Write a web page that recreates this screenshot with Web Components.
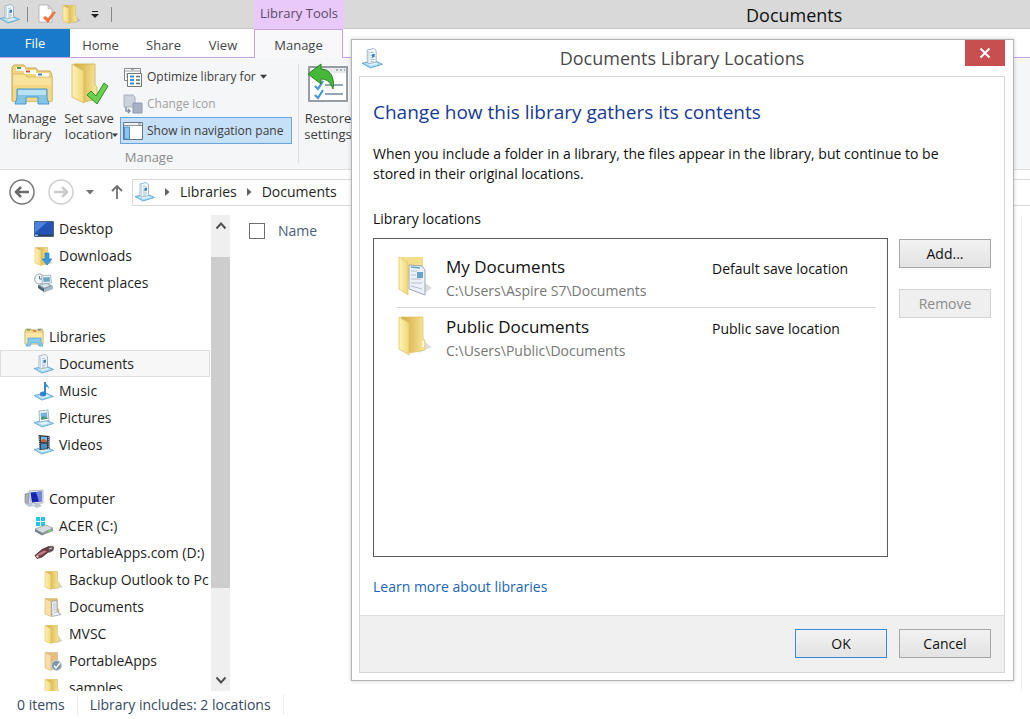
<!DOCTYPE html>
<html lang="en">
<head>
<meta charset="utf-8">
<title>Documents</title>
<style>
html,body{margin:0;height:100%}
body{font-family:"Open Sans","Noto Sans",sans-serif;font-size:14px;line-height:20px;color:#1e1e1e;background:#fff;overflow:hidden;
--small:13px;--title:18px}
</style>
</head>
<body>
<library-app></library-app>
<script>
const libraryTray = `<path d="M0 14.500 12 12 19.500 15.500 8 19Z" fill="#a3d8f2" stroke="#56a0cc" stroke-width=".8"/><path d="m4 15 8-1.700 4 2L8.500 17Z" fill="#dcf2fc"/>`;
const folderFills = `<defs><linearGradient id="inner"><stop offset="0" stop-color="#cfa94a"/><stop offset=".45" stop-color="#e2c262"/><stop offset="1" stop-color="#f8e8a0"/></linearGradient><linearGradient id="flap"><stop offset="0" stop-color="#fdf3b8"/><stop offset="1" stop-color="#f0d878"/></linearGradient></defs>`;
const folderShape = folderFills + `<path d="M14 12 19 17 14 18.500H9Z" fill="#8b929c" opacity=".35"/><path d="M2 1.500h11.500v10l1.500 1v5l-8 1.500Z" fill="url(#inner)" stroke="#dcbc58" stroke-width=".6"/><path d="M1 1.500 7 4.500V19.500L1 17Z" fill="url(#flap)" stroke="#dcbf60" stroke-width=".6"/>`;
const ICONS = {
  doclib: ['0 0 20 20', libraryTray + `<path d="M5 2 11 .5 13.500 2.500V13.500L6 15 5 13.500Z" fill="#f3f9fd" stroke="#8fa9bd" stroke-width=".8"/><path d="M6.500 3v11" stroke="#b9cfde" stroke-width=".8"/><path d="M8 4.500 11 4M8 7h1.500M8 9h1.500M8 11h4M8 13h3" stroke="#90b1c8" stroke-width=".8"/><path d="M9.500 6 12 5.500v3l-2.500.7Z" fill="#3c7fb8"/>`],
  music: ['0 0 20 20', libraryTray + `<path d="M11 1v11.500" stroke="#2674bd" stroke-width="1.800"/><path d="M11 1c1 3 4 3 4 7-1-2-2-2.500-4-3Z" fill="#2e8bd6"/><ellipse cx="9" cy="13" rx="3.200" ry="2.500" fill="#2f84cf"/>`],
  pictures: ['0 0 20 20', libraryTray + `<path d="M5 3 14 2l1 10.500-9.500 1.500Z" fill="#f4f9fc" stroke="#8ca4b4" stroke-width=".8"/><path d="m6.500 5 6.500-.8.6 6.500-6.600 1Z" fill="#75b5dc"/><path d="m7 9.500 2.600-1.500 4 2v.7l-6.600 1Z" fill="#4f9578"/>`],
  videos: ['0 0 20 20', libraryTray + `<path d="m4.500 0 11 1v13L5.500 15Z" fill="#28333f"/><path d="m7 1.500 6 .5v5.200L7 7Z" fill="#78bce9"/><path d="m7 5 3-1 3 2v1.200L7 7Z" fill="#bd6338"/><path d="m7 8.500 6 .3v4.700l-6 .5Z" fill="#4d8fc0"/><path d="M5.700 1.500v13M14.300 2v12" stroke="#e0e4e8" stroke-width=".9" stroke-dasharray="1 1.200"/>`],
  newdoc: ['0 0 20 20', `<path d="M2 1h9l4 4v13H2Z" fill="#fff" stroke="#a5a5a5" stroke-width=".7"/><path d="M11 1v4h4Z" fill="#dadada" stroke="#aaa" stroke-width=".5"/><path d="m6 14 2-2 3 2 6-7 2 1.500L11 19Z" fill="#ee7445"/>`],
  folder: ['0 0 20 20', folderShape],
  folderdoc: ['0 0 20 20', `<path d="M2 1.500h11.500v10l1.500 1v5l-8 1.500Z" fill="#dfbe7c" stroke="#d8ba6c" stroke-width=".6"/><path d="M7.500 4.500 13 3.500v11l4 3-9 2Z" fill="#eceff5" stroke="#8f95a3" stroke-width=".7"/><path d="M9 7h3M9 9h3M9 11h3M9 13h3M10 15.500h3" stroke="#a8b4c8" stroke-width=".7"/><path d="M1 1.500 7 4.500V19.500L1 17Z" fill="#f8dfa6" stroke="#d2b472" stroke-width=".6"/>`],
  folderapp: ['0 0 20 20', `<path d="M2 1.500h11.500v10l1.500 1v5l-8 1.500Z" fill="#e5bd7e" stroke="#d5b47b" stroke-width=".6"/><path d="M1 1.500 7 4.500V19.500L1 17Z" fill="#f8dcaa" stroke="#d2b17b" stroke-width=".6"/><circle cx="12.500" cy="14.500" r="5" fill="#7898aa" stroke="#ced9df"/><path d="m10 14.500 2 2.500 4-5" stroke="#fff" stroke-width="1.500" fill="none"/>`],
  folderdown: ['0 0 20 20', folderShape + `<path d="M11 7h4v6h3l-5 6-5-6h3Z" fill="#369be2" stroke="#207ab8" stroke-width=".6"/>`],
  desktop: ['0 0 20 20', `<path d="M.5 2.500h19v15H.5Z" fill="#2354b5" stroke="#4c6583"/><path d="M1 3h12L1 14Z" fill="#4b82df"/><path d="M1 15.500h18V17H1Z" fill="#2b425f"/><path d="M1 15.500h3V17H1Z" fill="#8cbde8"/>`],
  recent: ['0 0 20 20', `<circle cx="5.500" cy="6" r="5" fill="#eef4f8" stroke="#9aa8b4"/><path d="M5.500 3v3H8" stroke="#597790" fill="none"/><path d="m7.500 3 9-1 1 8-9 1Z" fill="#eef5fa" stroke="#8b9cab" stroke-width=".7"/><path d="m9 4.500 6.500-.6.6 4.500-6.500.6Z" fill="#69a4c2"/><path d="m4 12 9-2 6 3-9 4Z" fill="#8296a6"/><path d="m4 12 6 4v3l-6-4Z" fill="#4b6172"/><path d="m10 16 9-3v3l-9 3.500Z" fill="#a7b8c5"/><path d="m6 12 7-1.300 3 2-6 2Z" fill="#d9e6ee"/>`],
  libraries: ['0 0 20 20', `<path d="M1 4 2 2h5l1 1h5l1-1h4l1 2v13H1Z" fill="#f0d889" stroke="#b99c4c" stroke-width=".8"/><path d="M3 3h3" stroke="#52a661" stroke-width="1.300"/><path d="M9 4h3" stroke="#cd644e" stroke-width="1.300"/><path d="M14 3h3" stroke="#4d90c4" stroke-width="1.300"/><path d="M1.500 6h17v11h-17Z" fill="#fae8a4"/><path d="M4 11h13v4l2 4h-4l-1-3H7l-1 3H2l2-4Z" fill="#85cdef" stroke="#569dc7" stroke-width=".7"/>`],
  computer: ['0 0 20 20', `<path d="m1 5 4-1v12l-4-2Z" fill="#a8b1b9" stroke="#78818a" stroke-width=".6"/><path d="M5 2 19 1V14L7 15Z" fill="#e1e6eb" stroke="#9aa4ac" stroke-width=".7"/><path d="M6.500 3.500 17.500 2.500v10L8 13.500Z" fill="#1a24b4"/><path d="m12 3 5.500-.5v10L15 12.700Z" fill="#6e86e0"/><path d="m11 15 4-.5 3 2.500-5 2-4-2Z" fill="#c0c8cf"/><path d="m1 15 6-1 3 3-5 1Z" fill="#bec6cf"/>`],
  drive: ['0 0 20 20', `<path d="M2 1h4v4H2ZM7 1h4v4H7ZM2 6h4v4H2ZM7 6h4v4H7Z" fill="#23c4ed"/><path d="m1 13 11-4 7 3-11 5Z" fill="#d6dcdf" stroke="#879295" stroke-width=".6"/><path d="m1 13 7 4v2.500l-7-4Z" fill="#76828a"/><path d="m8 17 11-5v3L8 19.500Z" fill="#8f9a9e"/><path d="m14 15.500 3-1.300" stroke="#72e271" stroke-width="1.300"/>`],
  usb: ['0 0 20 20', `<path d="M1 12.500 8 6.500l7-3 2 3.500-9 7-5 1.500Z" fill="#763b43" stroke="#4d2930" stroke-width=".8"/><path d="m3 11.500 7-4 3 1-7 4Z" fill="#bd8289"/><path d="m13 4.500 5-1.500 2 1.500-1 3-4 2Z" fill="#6b5559" stroke="#4a3c40" stroke-width=".6"/><path d="m15 6 3-1" stroke="#ccc"/><circle cx="3.500" cy="13.500" r="1.200" fill="#e4cfd1"/>`],
  managelib: ['0 0 42 42', `<path d="M1 10V4l2-2h10l2 3h10l2 3h12l2 4v26H1Z" fill="#efd57c" stroke="#caa64a"/><path d="M5 4h9v4H5Z" fill="#fff"/><path d="M13 7h12v4H13Z" fill="#fff"/><path d="M25 10h13v4H25Z" fill="#fff"/><path d="M6 5h4" stroke="#4b9b4b" stroke-width="2"/><path d="M15 8.500h4" stroke="#d64b3a" stroke-width="2"/><path d="M27 11.500h4" stroke="#3c7dbd" stroke-width="2"/><path d="M1.500 11H14l2 3h25v24.500H1.500Z" fill="#f8e39a" stroke="#d5b55d" stroke-width=".8"/><path d="M2 22h38v16H2Z" fill="#ebcd73" opacity=".5"/><path d="M6 26h30v9l2 6H27v-7H15v7H4l2-6Z" fill="#82c5ea" stroke="#4898c9"/><path d="M7 27h28v5H7Z" fill="#b9e2f6"/>`],
  savelocation: ['0 0 42 42', folderFills + `<path d="M6 1h21v21l2 2v12l-13 3Z" fill="url(#inner)" stroke="#d2ae50" stroke-width=".8"/><path d="M4 1 16 8v32L4 34Z" fill="url(#flap)" stroke="#d8b65a" stroke-width=".8"/><path d="m19 32 4-4 5 5 8-13 4 3-11 18Z" fill="#6bd050" stroke="#2f8f29"/>`],
  optimize: ['0 0 20 20', `<path d="M1.500 1.500h16v12h-16Z" fill="#fff" stroke="#888"/><path d="M2 4h15" stroke="#999"/><path d="M3 7h2M3 10h2M8 2.500h3" stroke="#9ab"/><path d="M4.500 6.500h14v13h-14Z" fill="#fff" stroke="#777"/><path d="M7 9.500h4M7 13h4M7 16.500h4" stroke="#438aca" stroke-width="2"/><path d="M13 9.500h4M13 13h4M13 16.500h4" stroke="#5c7468" stroke-width="1.500"/>`],
  changeicon: ['0 0 20 20', `<path d="M1 1h9l2 2v10H1Z" fill="#ccd2dc" stroke="#a8b0bd"/><path d="M10 9h9v10h-9Z" fill="#a6b1c6" stroke="#8e9ab0"/><path d="M3 13v4h4M5 15l2 2-2 2" fill="none" stroke="#8491ad" stroke-width="1.500"/>`],
  navpane: ['0 0 20 20', `<path d="M.5 1.500h19v17H.5Z" fill="#fff" stroke="#68747f"/><path d="M1 2h18v2.500H1Z" fill="#f4f4f4"/><path d="M1 4.500h18" stroke="#8b959e"/><path d="M1.500 6h5v12h-5Z" fill="#8dc5ef" stroke="#4b93ca"/><path d="M15 3h3" stroke="#888"/>`],
  restore: ['0 0 42 42', `<path d="M2 4h38v34H2Z" fill="#fff" stroke="#969da4" stroke-width="2"/><path d="M3 5h36v5H3Z" fill="#e8eaed"/><path d="M29 7h2M33 7h2M37 7h1" stroke="#777"/><path d="M18 22h18M18 31h18" stroke="#94a7b4" stroke-width="2"/><path d="m8 23 3 3 5-8M8 32l3 3 5-8" fill="none" stroke="#4498d3" stroke-width="2.200"/><path d="M1 11 14 1v5c9 0 14 8 12 20-3-8-7-10-12-10v5Z" fill="#46b838" stroke="#258222"/>`],
  mydocs: ['0 0 40 40', folderFills + `<path d="m25 38 9-6-7-5Z" fill="#777" opacity=".25"/><path d="M3 1h22v27l-12 4Z" fill="#f3de8a"/><path d="m11 9 13 1 3 4v25l-16-6Z" fill="#eef1fa" stroke="#9fa3b8"/><path d="m13 11 9 1" stroke="#5da7bd" stroke-width="1.500"/><path d="M13 15h6M13 19h5M13 23h10M13 27h11M13 30l11 3" stroke="#b3bed3"/><path d="M19 16h6v6h-6Z" fill="#62a4ca"/><path d="m1 1 9 6v32l-9-6Z" fill="url(#flap)" stroke="#e1c56d" stroke-width=".8"/>`],
  publicdocs: ['0 0 40 40', folderFills + `<path d="m20 37 14-6-8-5Z" fill="#777" opacity=".25"/><path d="M3 1h22v21l2 3v9l-16 3Z" fill="url(#inner)" stroke="#dfc064" stroke-width=".7"/><path d="m1 1 10 6v32l-10-6Z" fill="url(#flap)" stroke="#e1c56d" stroke-width=".8"/><path d="M25 25v6" stroke="#fff" stroke-width="1.500"/>`],
  back: ['0 0 26 26', `<circle cx="13" cy="13" r="12" fill="#fff" stroke="#777" stroke-width="1.500"/><path d="M20 13H8M12 8l-5 5 5 5" stroke="#6b6b6b" stroke-width="2.500" fill="none"/>`],
  forward: ['0 0 26 26', `<circle cx="13" cy="13" r="12" fill="#fff" stroke="#cfcfcf" stroke-width="1.500"/><path d="M6 13h12M14 8l5 5-5 5" stroke="#cacaca" stroke-width="2.500" fill="none"/>`],
  up: ['0 0 16 16', `<path d="M8 15V2M3 7l5-5 5 5" stroke="#707070" stroke-width="1.800" fill="none"/>`],
  down: ['0 0 8 8', `<path d="M0 2h8L4 6.500Z" fill="currentColor"/>`],
  right: ['0 0 8 8', `<path d="M2 0v8l4.500-4Z" fill="#606060"/>`],
  chevup: ['0 0 12 12', `<path d="m1.500 8.500 4.500-5 4.500 5" fill="none" stroke="#505050" stroke-width="2"/>`],
  chevdown: ['0 0 12 12', `<path d="m1.500 3.500 4.500 5 4.500-5" fill="none" stroke="#505050" stroke-width="2"/>`],
  customize: ['0 0 8 8', `<path d="M1 1.500h6" stroke="#222"/><path d="M0 4h8L4 8Z" fill="#222"/>`],
  close: ['0 0 12 12', `<path d="m1.500 1.500 9 9m0-9-9 9" stroke="#fff" stroke-width="2"/>`]
};
const define = (name, html) => {
  const template = document.createElement('template');
  template.innerHTML = html;
  customElements.define(name, class extends HTMLElement {
    constructor(){ super(); this.attachShadow({mode:'open'}).append(template.content.cloneNode(true)); }
    connectedCallback(){
      const own = this.shadowRoot.querySelector('ui-icon[data-own]');
      if (own && this.getAttribute('icon')) own.setAttribute('name', this.getAttribute('icon'));
      const button = this.shadowRoot.querySelector('button');
      if (button && this.hasAttribute('disabled')) button.disabled = true;
    }
  });
};

customElements.define('ui-icon', class extends HTMLElement {
  static observedAttributes = ['name'];
  constructor(){ super(); this.attachShadow({mode:'open'}); }
  attributeChangedCallback(){
    const [box, art] = ICONS[this.getAttribute('name')];
    this.shadowRoot.innerHTML = `<style>:host{display:block;flex:none;width:var(--size,20px);height:var(--size,20px)}svg{display:block;width:100%;height:100%}</style><svg viewBox="${box}" aria-hidden="true">${art}</svg>`;
  }
});

define('push-button', `<style>
:host{display:block;width:92px}
button{width:100%;height:29px;padding:0;border:1px solid #a6a6a6;background:linear-gradient(#f2f2f2,#e3e3e3);font:inherit;color:#111}
:host([primary]) button{border-color:#3d8bd8}
button:disabled{border-color:#d3d3d3;background:#efefef;color:#8b8b8b}
</style><button type="button"><slot></slot></button>`);

define('ribbon-tab', `<style>
:host{display:block}
button{width:100%;height:100%;padding:3px 0 0;border:0;background:none;font:inherit;font-size:var(--small);color:#444}
:host([file]) button{padding:0;background:#1979ca;color:#fff}
:host([active]) button{padding-top:2px;background:#f8f8fb;border:solid #c9a2dd;border-width:1px 1px 0}
</style><button type="button"><slot></slot></button>`);

define('ribbon-large', `<style>
:host{display:block}
button{width:100%;padding:0;border:0;background:none;font:inherit;font-size:var(--small);line-height:16px;color:#3c3c3c;text-align:center;white-space:nowrap}
ui-icon{--size:42px;margin:0 auto 5px}
</style><button type="button"><ui-icon data-own></ui-icon><slot></slot></button>`);

define('ribbon-small', `<style>
:host{display:block}
button{display:flex;align-items:center;gap:4px;width:100%;height:27px;padding:0 3px 0 2px;border:1px solid transparent;background:none;font:inherit;font-size:12px;color:#3c3c3c;white-space:nowrap}
button:disabled{color:#a0a0a0}
:host([pressed]) button{background:#c6e0f8;border-color:#66a5e0}
</style><button type="button"><ui-icon data-own></ui-icon><slot></slot></button>`);

define('nav-item', `<style>
:host{display:block;box-sizing:border-box;height:27px;flex:none;padding-left:calc(23px + var(--level,0)*10px);border:1px solid transparent;margin-right:1px}
:host([selected]){background:#f7f7f7;border-color:#dedede}
a{display:flex;align-items:center;gap:5px;height:25px;color:inherit;text-decoration:none;white-space:nowrap}
</style><a href="#"><ui-icon data-own></ui-icon><span><slot></slot></span></a>`);

define('title-bar', `<style>
:host{display:flex;height:28px;flex:none;background:#d9d9d9;border-bottom:1px solid #c6c6c6}
.quick{display:flex;align-items:center;width:254px;flex:none}
button{border:0;padding:0;background:none;color:#222}
i{width:1px;height:15px;background:#888;margin:0 9px 0 7px}
.fresh{margin-right:5px}.more{--size:8px;margin:0 5px 0 9px}
.tools{width:90px;flex:none;background:#e8c9fa;color:#5c4a68;text-align:center;font-size:var(--small);line-height:26px;height:29px}
h1{margin:0;padding:0 0 0 402px;font-size:var(--title);font-weight:400;line-height:30px;color:#111}
</style><div class="quick"><ui-icon name="doclib"></ui-icon><i></i>
<button class="fresh" type="button" aria-label="Properties"><ui-icon name="newdoc"></ui-icon></button>
<button type="button" aria-label="New folder"><ui-icon name="folder"></ui-icon></button>
<button class="more" type="button" aria-label="Customize"><ui-icon name="customize"></ui-icon></button><i></i></div>
<div class="tools">Library Tools</div><h1>Documents</h1>`);

define('ribbon-tabs', `<style>
:host{display:flex;height:29px;flex:none;background:linear-gradient(#c9a2dd,#c9a2dd) bottom/100% 1px no-repeat}
.file{width:70px;height:28px}.home{width:61px}.share{width:65px}.view{width:54px;margin-right:4px}.manage{width:89px}
</style><ribbon-tab class="file" file>File</ribbon-tab><ribbon-tab class="home">Home</ribbon-tab><ribbon-tab class="share">Share</ribbon-tab><ribbon-tab class="view">View</ribbon-tab><ribbon-tab class="manage" active>Manage</ribbon-tab>`);

define('ribbon-panel', `<style>
:host{display:flex;height:111px;flex:none;background:#f5f6f8;border-bottom:1px solid #dcdddf;font-size:var(--small)}
.group{display:flex;flex-direction:column;width:298px;flex:none}
.tools{display:flex;padding-top:5px;height:84px}
.lib{width:64px}.save{position:relative;width:50px;margin-right:6px}.small{width:172px}
.label{text-align:center;line-height:24px;color:#8b8b8b}
.line{width:1px;margin:6px 0;background:#dedfe1}
.restore{width:58px;padding-top:5px}
.arrow{position:absolute;right:-4px;top:69px;--size:6px;margin:0}
</style><div class="group"><div class="tools">
<ribbon-large class="lib" icon="managelib">Manage<br>library</ribbon-large>
<ribbon-large class="save" icon="savelocation">Set save<br>location<ui-icon class="arrow" name="down"></ui-icon></ribbon-large>
<div class="small"><ribbon-small icon="optimize">Optimize library for <ui-icon style="--size:7px" name="down"></ui-icon></ribbon-small>
<ribbon-small icon="changeicon" disabled>Change icon</ribbon-small>
<ribbon-small icon="navpane" pressed>Show in navigation pane</ribbon-small></div>
</div><div class="label">Manage</div></div><div class="line"></div>
<ribbon-large class="restore" icon="restore">Restore<br>settings</ribbon-large>`);

define('address-bar', `<style>
:host{display:flex;align-items:center;height:44px;flex:none;padding-left:9px}
button{border:0;padding:0;background:none;color:#707070}
.round{--size:26px;margin-right:13px}.hist{--size:8px;margin:0 15px 0 -1px}.up{--size:16px;margin-right:7px}
nav{display:flex;align-items:center;flex:1;height:25px;border:1px solid #d9d9d9;border-right:0;padding-left:2px}
nav>ui-icon{--size:8px;margin:0 9px 0 8px}nav>.lib{--size:20px;margin:0}
a{color:inherit;text-decoration:none}
</style><button class="round" type="button" aria-label="Back"><ui-icon name="back"></ui-icon></button>
<button class="round" type="button" aria-label="Forward"><ui-icon name="forward"></ui-icon></button>
<button class="hist" type="button" aria-label="Recent locations"><ui-icon name="down"></ui-icon></button>
<button class="up" type="button" aria-label="Up"><ui-icon name="up"></ui-icon></button>
<nav><ui-icon class="lib" name="doclib"></ui-icon><ui-icon name="right"></ui-icon><a href="#">Libraries</a><ui-icon name="right"></ui-icon><a href="#">Documents</a></nav>`);

define('nav-pane', `<style>
:host{display:flex;width:230px;flex:none;overflow:hidden}
nav{flex:1;min-width:0;overflow:hidden;display:flex;flex-direction:column}
.gap{height:27px;flex:none}
.one{--level:1}.two{--level:2}
.bar{display:flex;flex-direction:column;width:19px;flex:none;background:#efefef}
.bar button{display:grid;place-items:center;height:22px;padding:0;border:0;background:none;--size:12px}
.track{flex:1;display:grid;grid-template-rows:20fr 331fr 81fr}
.thumb{grid-row:2;background:#cdcdcd}
</style><nav>
<nav-item class="one" icon="desktop">Desktop</nav-item><nav-item class="one" icon="folderdown">Downloads</nav-item><nav-item class="one" icon="recent">Recent places</nav-item>
<div class="gap"></div>
<nav-item icon="libraries">Libraries</nav-item><nav-item class="one" icon="doclib" selected>Documents</nav-item><nav-item class="one" icon="music">Music</nav-item><nav-item class="one" icon="pictures">Pictures</nav-item><nav-item class="one" icon="videos">Videos</nav-item>
<div class="gap"></div>
<nav-item icon="computer">Computer</nav-item><nav-item class="one" icon="drive">ACER (C:)</nav-item><nav-item class="one" icon="usb">PortableApps.com (D:)</nav-item>
<nav-item class="two" icon="folder">Backup Outlook to Pc</nav-item><nav-item class="two" icon="folderdoc">Documents</nav-item><nav-item class="two" icon="folder">MVSC</nav-item><nav-item class="two" icon="folderapp">PortableApps</nav-item><nav-item class="two" icon="folder">samples</nav-item>
</nav><div class="bar"><button type="button" aria-label="Scroll up"><ui-icon name="chevup"></ui-icon></button><div class="track"><div class="thumb"></div></div><button type="button" aria-label="Scroll down"><ui-icon name="chevdown"></ui-icon></button></div>`);

define('file-list', `<style>
:host{display:block;flex:1;margin-right:8px;border-right:1px solid #f0f0f0}
label{display:flex;align-items:center;gap:13px;padding:6px 19px;color:#4c6078}
input{appearance:none;width:16px;height:16px;margin:0;border:1px solid #6e6e6e;background:#fff}
</style><label><input type="checkbox">Name</label>`);

define('status-bar', `<style>
:host{display:flex;align-items:center;height:28px;flex:none;color:#36495f;padding-left:17px}
span{padding-right:12px;margin-right:12px;border-right:1px solid #ececec}
</style><span>0 items</span><span>Library includes: 2 locations</span>`);

define('location-row', `<style>
:host{display:grid;grid-template-columns:40px 1fr 164px;column-gap:9px;height:59px;align-items:start}
:host([ruled]){border-bottom:1px solid #d6d6d6}
ui-icon{--size:40px;margin:8px 0 0 1px}
.name{margin-top:7px;font-size:17px;line-height:24px;color:#111}
.path{line-height:24px;color:#767676}
.note{margin-top:11px}
</style><ui-icon data-own></ui-icon><div><div class="name"><slot></slot></div><div class="path"><slot name="path"></slot></div></div><div class="note"><slot name="note"></slot></div>`);

define('locations-dialog', `<style>
:host{display:block;box-sizing:border-box;border:1px solid #b4b4b4;background:#fff;padding:0 8px 7px 7px;box-shadow:0 0 4px #0003;color:#111}
header{display:grid;grid-template-columns:40px 1fr 40px;height:36px;--size:21px}
header ui-icon{margin:8px 0 0 3px}
h2{margin:0;text-align:center;font-size:var(--title);font-weight:400;line-height:37px;color:#4a4a4a}
.close{display:grid;place-items:center;height:26px;border:0;padding:0;background:#c74f50}
.close ui-icon{--size:12px;margin:0}
.panel{border:1px solid #d6d6d6}
.main{padding:22px 13px 18px}
h3{margin:0 0 18px;font-size:19px;font-weight:400;line-height:27px;color:#173a94}
p{margin:0;max-width:590px}
.label{margin:25px 0 9px}
.cols{display:grid;grid-template-columns:1fr 92px;gap:11px}
.list{box-sizing:border-box;height:319px;border:1px solid #5c5c5c;padding:9px 11px 0 23px}
.side{display:grid;gap:21px;align-content:start;padding-top:1px}
.more{display:inline-block;margin-top:20px;color:#1a66b8;text-decoration:none}
footer{display:flex;justify-content:flex-end;gap:12px;padding:13px;height:30px;border-top:1px solid #dedede;background:#f0f0f0}
</style><header><ui-icon name="doclib"></ui-icon><h2>Documents Library Locations</h2><button class="close" type="button" aria-label="Close"><ui-icon name="close"></ui-icon></button></header>
<div class="panel"><div class="main"><h3>Change how this library gathers its contents</h3>
<p>When you include a folder in a library, the files appear in the library, but continue to be stored in their original locations.</p>
<div class="label">Library locations</div>
<div class="cols"><div class="list">
<location-row icon="mydocs" ruled>My Documents<span slot="path">C:\\Users\\Aspire S7\\Documents</span><span slot="note">Default save location</span></location-row>
<location-row icon="publicdocs">Public Documents<span slot="path">C:\\Users\\Public\\Documents</span><span slot="note">Public save location</span></location-row>
</div><div class="side"><push-button>Add...</push-button><push-button disabled>Remove</push-button></div></div>
<a class="more" href="#">Learn more about libraries</a></div>
<footer><push-button primary>OK</push-button><push-button>Cancel</push-button></footer></div>`);

define('library-app', `<style>
:host{display:flex;flex-direction:column;height:100vh;position:relative;overflow:hidden}
.body{display:flex;flex:1;min-height:0;padding-top:1px}
locations-dialog{position:absolute;top:39px;left:351px;right:16px}
</style><title-bar></title-bar><ribbon-tabs></ribbon-tabs><ribbon-panel></ribbon-panel><address-bar></address-bar>
<div class="body"><nav-pane></nav-pane><file-list></file-list></div><status-bar></status-bar>
<locations-dialog role="dialog" aria-label="Documents Library Locations"></locations-dialog>`);
</script>
</body>
</html>
